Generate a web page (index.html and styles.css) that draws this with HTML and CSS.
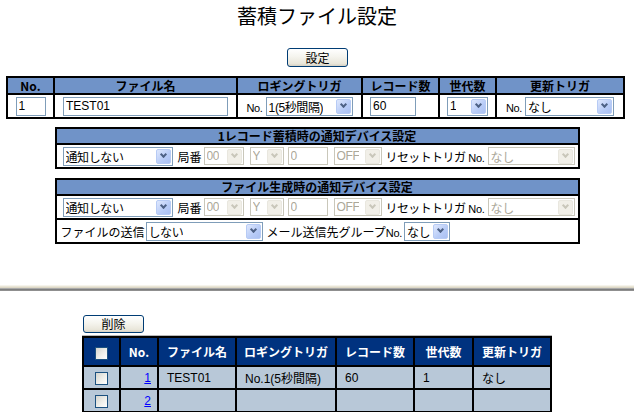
FILE: index.html
```html
<!DOCTYPE html>
<html lang="ja">
<head>
<meta charset="utf-8">
<title>蓄積ファイル設定</title>
<link rel="stylesheet" href="styles.css">
</head>
<body>
<h1 class="title">蓄積ファイル設定</h1>
<div class="btn-row"><button class="xp-btn set-btn">設定</button></div>

<table class="cfg">
  <colgroup>
    <col class="c-no"><col class="c-name"><col class="c-log"><col class="c-rec"><col class="c-gen"><col class="c-upd">
  </colgroup>
  <tr>
    <th>No.</th><th>ファイル名</th><th>ロギングトリガ</th><th>レコード数</th><th>世代数</th><th>更新トリガ</th>
  </tr>
  <tr>
    <td class="ctr"><input class="tx w30" value="1"></td>
    <td class="ctr"><input class="tx w165" value="TEST01"></td>
    <td class="ctr"><div class="inl"><span class="no">No.</span><span class="sel w87"><span class="st">1(5秒間隔)</span><i class="dd"></i></span></div></td>
    <td class="rec"><input class="tx w46" value="60"></td>
    <td class="ctr"><div class="inl"><span class="sel w41"><span class="st">1</span><i class="dd"></i></span></div></td>
    <td class="ctr"><div class="inl"><span class="no">No.</span><span class="sel w89"><span class="st">なし</span><i class="dd"></i></span></div></td>
  </tr>
</table>

<table class="box">
  <tr><th>1レコード蓄積時の通知デバイス設定</th></tr>
  <tr><td>
    <div class="line">
      <span class="sel w110"><span class="st">通知しない</span><i class="dd"></i></span>
      <span class="lbl kyoku">局番</span>
      <span class="sel dis w40"><span class="st">00</span><i class="dd"></i></span>
      <span class="sel dis w34 g6"><span class="st">Y</span><i class="dd"></i></span>
      <input class="tx dis w40 g4" value="0" disabled>
      <span class="sel dis w48 g6"><span class="st">OFF</span><i class="dd"></i></span>
      <span class="lbl tight g4">リセットトリガ</span>
      <span class="no g3">No.</span>
      <span class="sel dis w87"><span class="st">なし</span><i class="dd"></i></span>
    </div>
  </td></tr>
</table>

<table class="box">
  <tr><th>ファイル生成時の通知デバイス設定</th></tr>
  <tr><td>
    <div class="line">
      <span class="sel w110"><span class="st">通知しない</span><i class="dd"></i></span>
      <span class="lbl kyoku">局番</span>
      <span class="sel dis w40"><span class="st">00</span><i class="dd"></i></span>
      <span class="sel dis w34 g6"><span class="st">Y</span><i class="dd"></i></span>
      <input class="tx dis w40 g4" value="0" disabled>
      <span class="sel dis w48 g6"><span class="st">OFF</span><i class="dd"></i></span>
      <span class="lbl tight g4">リセットトリガ</span>
      <span class="no g3">No.</span>
      <span class="sel dis w87"><span class="st">なし</span><i class="dd"></i></span>
    </div>
  </td></tr>
  <tr><td>
    <div class="line send">
      <span class="lbl">ファイルの送信</span>
      <span class="sel w117"><span class="st">しない</span><i class="dd"></i></span>
      <span class="lbl g4">メール送信先グループ</span><span class="no">No.</span>
      <span class="sel w46"><span class="st">なし</span><i class="dd"></i></span>
    </div>
  </td></tr>
</table>

<div class="rule"></div>

<div class="list-wrap">
  <button class="xp-btn del-btn">削除</button>
  <table class="list">
    <colgroup>
      <col class="l-cb"><col class="l-no"><col class="l-name"><col class="l-log"><col class="l-rec"><col class="l-gen"><col class="l-upd">
    </colgroup>
    <tr>
      <th><span class="cb"></span></th><th>No.</th><th>ファイル名</th><th>ロギングトリガ</th><th>レコード数</th><th>世代数</th><th>更新トリガ</th>
    </tr>
    <tr>
      <td class="cbc"><span class="cb"></span></td><td class="num"><a href="#">1</a></td><td>TEST01</td><td>No.1(5秒間隔)</td><td>60</td><td>1</td><td>なし</td>
    </tr>
    <tr>
      <td class="cbc"><span class="cb"></span></td><td class="num"><a href="#">2</a></td><td></td><td></td><td></td><td></td><td></td>
    </tr>
  </table>
</div>
</body>
</html>
```
FILE: styles.css
```css
html, body {
  margin: 0;
  padding: 0;
  background: #ffffff;
}
body {
  width: 634px;
  font-family: "Liberation Sans", "Noto Sans CJK JP", sans-serif;
  font-size: 12px;
  color: #000;
}

.title {
  margin: 4px 0 0;
  height: 24px;
  line-height: 24px;
  font-family: "Noto Sans CJK JP", sans-serif;
  font-size: 20px;
  font-weight: normal;
  text-align: center;
}

.btn-row {
  margin-top: 20px;
  display: flex;
  justify-content: center;
  padding-left: 1px;
}

.xp-btn {
  box-sizing: border-box;
  height: 19px;
  padding: 0;
  border: 1px solid #003c74;
  border-radius: 3px;
  background: linear-gradient(#ffffff, #f5f4ee 45%, #e9e6da 85%, #d5d0c2);
  font-family: "Noto Sans CJK JP", sans-serif;
  font-size: 12px;
  line-height: 16px;
  color: #000;
}
.set-btn { width: 61px; }
.del-btn { width: 61px; height: 18px; margin-left: 1px; display: block; }

/* ---- top settings table ---- */
.cfg {
  margin: 9px 0 0 6px;
  width: 619px;
  table-layout: fixed;
  border-collapse: separate;
  border-spacing: 0;
  border-top: 2px solid #000;
  border-left: 2px solid #000;
}
.c-no { width: 47px; }
.c-name { width: 183px; }
.c-log { width: 125px; }
.c-rec { width: 77px; }
.c-gen { width: 57px; }
.c-upd { width: 128px; }

.cfg th, .cfg td, .box th, .box td {
  border-right: 2px solid #000;
  border-bottom: 2px solid #000;
  padding: 0;
}
.cfg th, .box th {
  height: 15px;
  background: #7093c8;
  font-family: "Noto Sans CJK JP", sans-serif;
  font-weight: bold;
  font-size: 12px;
  line-height: 14px;
  text-align: center;
  white-space: nowrap;
}
.cfg td { height: 22px; }
.ctr { text-align: center; }
.rec { padding-left: 7px !important; }

.inl {
  display: inline-flex;
  align-items: center;
  vertical-align: middle;
}

.tx {
  box-sizing: border-box;
  height: 19px;
  margin: 0;
  padding: 0 2px;
  border: 1px solid #7f9db9;
  background: #fff;
  font-family: "Liberation Sans", "Noto Sans CJK JP", sans-serif;
  font-size: 12px;
  color: #000;
  vertical-align: middle;
}
.tx.dis {
  border-color: #c9c7ba;
  color: #aca899;
  height: 18px;
}

.no {
  font-family: "Liberation Sans", sans-serif;
  font-size: 11px;
  letter-spacing: -0.3px;
  margin-right: 3px;
  padding-top: 4px;
}

.sel {
  box-sizing: border-box;
  display: inline-flex;
  align-items: center;
  justify-content: space-between;
  height: 19px;
  border: 1px solid #7f9db9;
  background: #fff;
  padding-left: 2px;
  overflow: hidden;
  white-space: nowrap;
  font-family: "Liberation Sans", "Noto Sans CJK JP", sans-serif;
  font-size: 12px;
  vertical-align: middle;
}
.sel .st {
  overflow: hidden;
  letter-spacing: -0.4px;
}
.dd {
  flex: none;
  position: relative;
  box-sizing: border-box;
  width: 15px;
  height: 15px;
  margin: 1px;
  border: 1px solid #b7cbf5;
  border-radius: 2px;
  background: linear-gradient(135deg, #dfe8fd, #b7cbf7 60%, #aac0f2);
}
.dd::after {
  content: "";
  position: absolute;
  left: 4px;
  top: 2px;
  width: 3px;
  height: 3px;
  border-right: 2px solid #4d6185;
  border-bottom: 2px solid #4d6185;
  transform: rotate(45deg);
}
.sel.dis {
  border-color: #c9c7ba;
  color: #aca899;
  height: 18px;
}
.sel.dis .dd {
  border-color: #e9e7df;
  background: #f1efe8;
}
.sel.dis .dd::after {
  border-color: #c9c7ba;
}

.w30 { width: 30px; }
.w34 { width: 34px; }
.w40 { width: 40px; }
.w41 { width: 41px; }
.w46 { width: 46px; }
.w48 { width: 48px; }
.w87 { width: 87px; }
.w89 { width: 89px; }
.w110 { width: 110px; }
.w117 { width: 117px; }
.w165 { width: 165px; }
.g3 { margin-left: 3px; }
.g4 { margin-left: 4px; }
.g6 { margin-left: 6px; }

/* ---- notification boxes ---- */
.box {
  margin: 8px auto 0;
  width: 525px;
  border-collapse: separate;
  border-spacing: 0;
  border-top: 2px solid #000;
  border-left: 2px solid #000;
}
.box + .box { margin-top: 9px; }
.box th { height: 14px; }
.box td { height: 22px; }

.line {
  display: flex;
  align-items: center;
  padding-left: 6px;
}
.line.send { padding-left: 4px; }
.lbl {
  font-family: "Noto Sans CJK JP", sans-serif;
  font-size: 12px;
  white-space: nowrap;
}
.lbl.tight { letter-spacing: -0.6px; }
.kyoku { margin: 0 2px 0 5px; }
.send .sel.w117 { margin-left: 1px; }
.send .no { margin-right: 2px; }

/* ---- separator ---- */
.rule {
  margin-top: 41px;
  height: 6px;
  background: linear-gradient(#f6f4ec 0 1px, #e9e5d7 1px 2px, #ddd8c6 2px 3px, #a9a9a9 3px 4px, #7e7e7e 4px 5px, #8f8f8f 5px 6px);
}

/* ---- list ---- */
.list-wrap {
  width: 470px;
  margin: 24px 0 0 82px;
}
.list {
  margin-top: 3px;
  width: 470px;
  table-layout: fixed;
  border-collapse: separate;
  border-spacing: 0;
  border-top: 2px solid #000;
  border-left: 2px solid #000;
  box-shadow: 0 -1px 0 #b8b8b8;
}
.l-cb { width: 37px; }
.l-no { width: 38px; }
.l-name { width: 78px; }
.l-log { width: 100px; }
.l-rec { width: 78px; }
.l-gen { width: 59px; }
.l-upd { width: 78px; }
.list th, .list td {
  border-right: 2px solid #000;
  border-bottom: 2px solid #000;
  padding: 0;
}
.list th {
  height: 27px;
  background: #00327f;
  color: #fff;
  font-family: "Noto Sans CJK JP", sans-serif;
  font-weight: bold;
  font-size: 12px;
  text-align: center;
  white-space: nowrap;
}
.list td {
  height: 21px;
  background: #b8c8d8;
  padding-left: 8px;
  white-space: nowrap;
  font-family: "Liberation Sans", "Noto Sans CJK JP", sans-serif;
}
.list td.cbc { padding-left: 0; text-align: center; }
.list td.num { padding-left: 0; padding-right: 6px; text-align: right; }
.list a { color: #0000ff; text-decoration: underline; }

.cb {
  display: inline-block;
  box-sizing: border-box;
  width: 13px;
  height: 13px;
  border: 1px solid #1c5180;
  background: linear-gradient(135deg, #d5d5cf, #f1f1ed 60%, #ffffff);
  vertical-align: middle;
}
```
